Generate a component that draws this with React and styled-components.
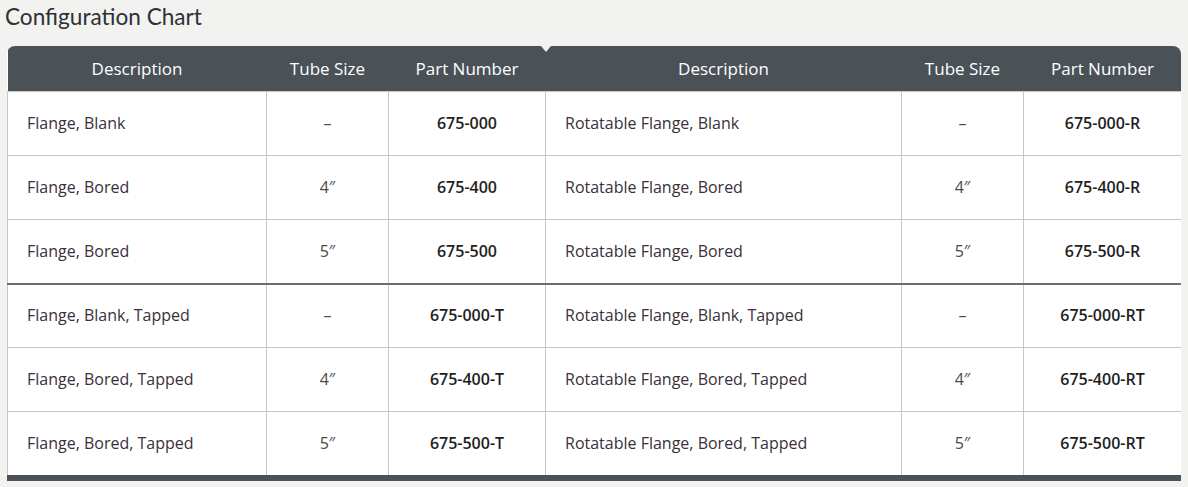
import React from "react";
import styled, { createGlobalStyle } from "styled-components";

const GlobalStyle = createGlobalStyle`
  body {
    margin: 0;
    background: #f2f2f0;
    font-family: "Open Sans", "Liberation Sans", sans-serif;
  }
`;

const rows = [
  ["Flange, Blank", "–", "675-000", "Rotatable Flange, Blank", "–", "675-000-R"],
  ["Flange, Bored", "4″", "675-400", "Rotatable Flange, Bored", "4″", "675-400-R"],
  ["Flange, Bored", "5″", "675-500", "Rotatable Flange, Bored", "5″", "675-500-R"],
  ["Flange, Blank, Tapped", "–", "675-000-T", "Rotatable Flange, Blank, Tapped", "–", "675-000-RT", true],
  ["Flange, Bored, Tapped", "4″", "675-400-T", "Rotatable Flange, Bored, Tapped", "4″", "675-400-RT"],
  ["Flange, Bored, Tapped", "5″", "675-500-T", "Rotatable Flange, Bored, Tapped", "5″", "675-500-RT"],
];

export default function App() {
  return (
    <Page>
      <GlobalStyle />
      <Title>Configuration Chart</Title>
      <ChartWrap>
        <Notch />
        <Chart>
          <colgroup>
            <col style={{ width: 259 }} />
            <col style={{ width: 122 }} />
            <col style={{ width: 157 }} />
            <col style={{ width: 356 }} />
            <col style={{ width: 122 }} />
            <col style={{ width: 158 }} />
          </colgroup>
          <thead>
            <tr>
              <HeadCell>Description</HeadCell>
              <HeadCell>Tube Size</HeadCell>
              <HeadCell>Part Number</HeadCell>
              <HeadCell>Description</HeadCell>
              <HeadCell>Tube Size</HeadCell>
              <HeadCell>Part Number</HeadCell>
            </tr>
          </thead>
          <tbody>
            {rows.map((r, i) => (
              <Row key={i} $divider={r[6]}>
                <DescCell>{r[0]}</DescCell>
                <SizeCell>{r[1]}</SizeCell>
                <PartCell>{r[2]}</PartCell>
                <DescCell>{r[3]}</DescCell>
                <SizeCell>{r[4]}</SizeCell>
                <PartCell>{r[5]}</PartCell>
              </Row>
            ))}
          </tbody>
        </Chart>
      </ChartWrap>
    </Page>
  );
}

const Page = styled.div`
  padding: 2px 0 0 5px;
`;

const Title = styled.h2`
  margin: 0 0 14px;
  font-family: Lato, "Liberation Sans", sans-serif;
  font-weight: 400;
  font-size: 22.6px;
  line-height: 30px;
  color: #2e3134;
`;

const ChartWrap = styled.div`
  position: relative;
  width: 1174px;
  margin-left: 2px;
  border-radius: 8px 8px 0 0;
  overflow: hidden;
  border-bottom: 6px solid #4a5157;
`;

const Notch = styled.span`
  position: absolute;
  left: 534px;
  top: 0;
  width: 0;
  height: 0;
  border-left: 5px solid transparent;
  border-right: 5px solid transparent;
  border-top: 6px solid #f2f2f0;
`;

const Chart = styled.table`
  width: 100%;
  table-layout: fixed;
  border-collapse: collapse;
  background: #fff;
`;

const HeadCell = styled.th`
  height: 45px;
  padding: 0;
  background: #4a5157;
  color: #fff;
  font-weight: 400;
  font-size: 17px;
  text-align: center;
`;

const Row = styled.tr`
  td {
    height: ${(p) => (p.$divider ? "60px" : "61px")};
    padding-bottom: 2px;
    border-top: ${(p) => (p.$divider ? "2px solid #6e6d65" : "1px solid #c9c7bf")};
  }
`;

const Cell = styled.td`
  padding: 0;
  border-left: 1px solid #c9c7bf;
  border-right: 1px solid #c9c7bf;
  font-size: 16px;
  color: #3a2f3a;
`;

const DescCell = styled(Cell)`
  padding-left: 19px;
  text-align: left;
`;

const SizeCell = styled(Cell)`
  text-align: center;
  color: #4a4a4a;
`;

const PartCell = styled(Cell)`
  text-align: center;
  font-weight: 600;
  color: #1e1e1e;
`;
